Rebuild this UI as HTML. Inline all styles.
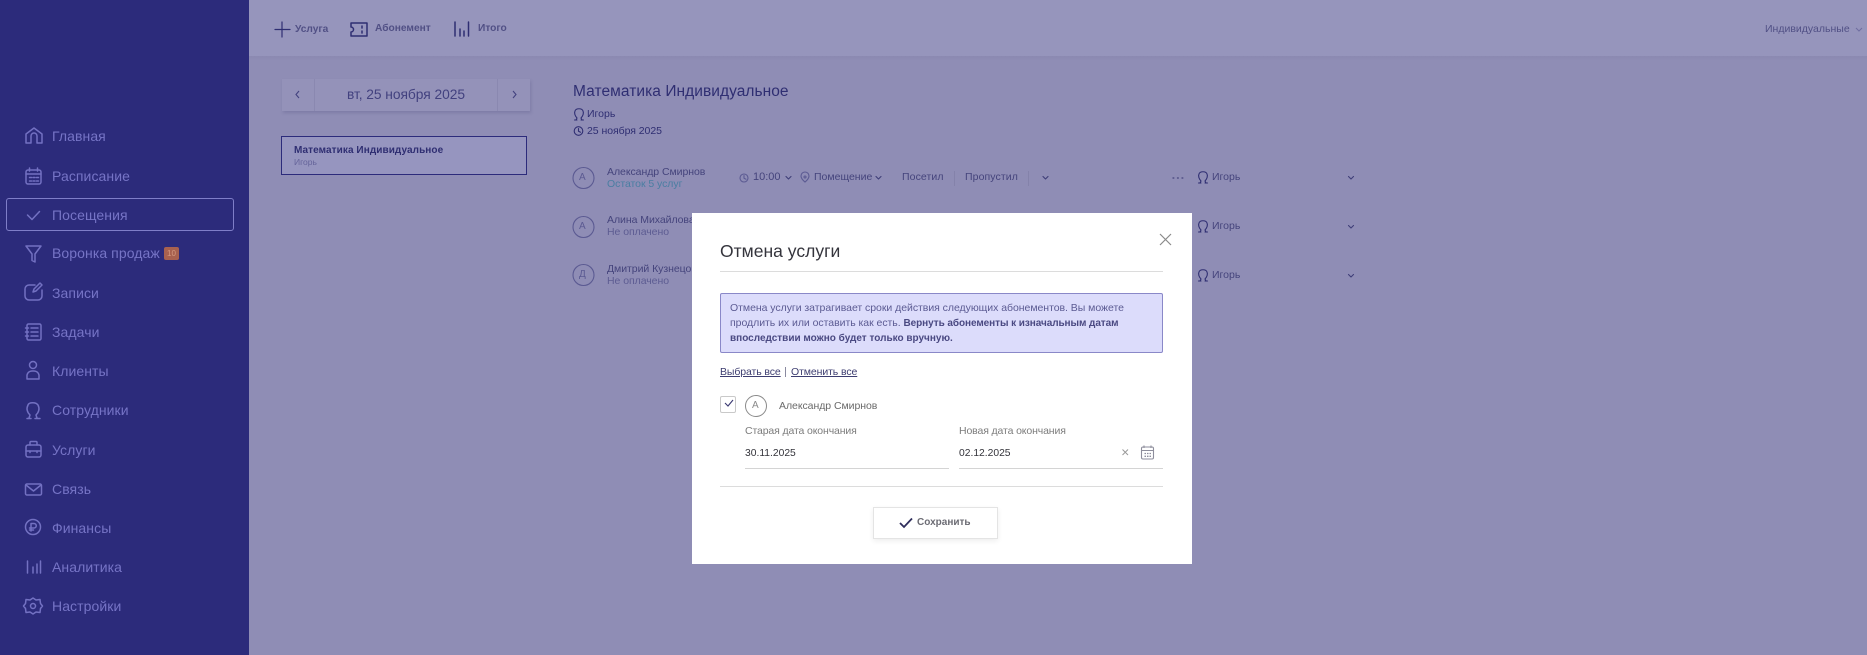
<!DOCTYPE html>
<html lang="ru"><head><meta charset="utf-8"><title>Отмена услуги</title>
<style>
*{box-sizing:border-box}
html,body{margin:0;padding:0;width:1867px;height:655px;overflow:hidden;background:#8f8db5;font-family:"Liberation Sans","DejaVu Sans",sans-serif}
.t{position:absolute;white-space:nowrap;line-height:1}
.a{position:absolute}
svg{position:absolute;overflow:visible;fill:none}
.s{font-size:14px;color:#7674c6;left:52px;letter-spacing:.08px}
.m{stroke:#7371c2;stroke-width:1.5}
.d{stroke:#2f2e72;stroke-width:1.1}
.dk{color:#2f2e72}
.g{color:#45447c}
.ln{position:absolute;height:1px;background:#dcdcdc}
</style></head><body>
<div class="a" style="left:0;top:0;width:249px;height:655px;background:#2c2b7b"></div>
<div class="a" style="left:6px;top:198px;width:228px;height:33px;border:1px solid #7f7ec8;border-radius:3px"></div>

<div class="t s" style="top:129px">Главная</div>
<div class="t s" style="top:169px">Расписание</div>
<div class="t s" style="top:208px">Посещения</div>
<div class="t s" style="top:246px">Воронка продаж</div>
<div class="a" style="left:164px;top:247px;width:15px;height:13px;background:#a8614f;border-radius:2px;color:#d5997f;font-size:8px;line-height:13px;text-align:center">10</div>
<div class="t s" style="top:286px">Записи</div>
<div class="t s" style="top:325px">Задачи</div>
<div class="t s" style="top:364px">Клиенты</div>
<div class="t s" style="top:403px">Сотрудники</div>
<div class="t s" style="top:443px">Услуги</div>
<div class="t s" style="top:482px">Связь</div>
<div class="t s" style="top:521px">Финансы</div>
<div class="t s" style="top:560px">Аналитика</div>
<div class="t s" style="top:599px">Настройки</div>

<svg class="m" style="left:0;top:-1px" width="249" height="655" stroke-linecap="round" stroke-linejoin="round">
<path d="M26 144v-9l8-6 8 6v9h-5v-7a3 3 0 0 0-6 0v7z"/>
<rect x="26" y="171" width="15" height="14" rx="2"/><path d="M26 175h15M29.500 169v3M37.500 169v3"/><path stroke-dasharray="2 1.500" d="M29.500 178.500h9M29.500 182h9"/>
<path d="M27.500 216l4.500 4.500 7.500-8"/>
<path d="M26 247h15l-6 8v8l-3-1.500v-6.500z"/>
<path d="M35 286h-6a4 4 0 0 0-4 4v7a4 4 0 0 0 4 4h9a4 4 0 0 0 4-4v-6M33 293l1-3 6-6 2 2-6 6z"/>
<rect x="27" y="325" width="14" height="16" rx="1.500"/><path d="M25.500 329h3M25.500 333h3M25.500 337h3M31 329h7M31 333h7M31 337h7"/>
<circle cx="33" cy="366" r="3.500"/><path d="M27 380v-4a5 5 0 0 1 5-4h2a5 5 0 0 1 5 4v4z"/>
<path d="M29 419l1-3c-3-3-4-6-2-10 1-3 8-3 10 0 2 4 1 7-2 10l1 3M27 419.500h4M35 419.500h5"/>
<rect x="26" y="446" width="15" height="12" rx="2"/><path d="M30 446v-2.500a1 1 0 0 1 1-1h5a1 1 0 0 1 1 1v2.500M26 452h15" /><path d="M30 452v1.500M37 452v1.500"/>
<rect x="25.500" y="485" width="16" height="11" rx="1.500"/><path d="M26 486l7.500 6 7.500-6"/>
<circle cx="33" cy="528" r="7.500"/><path d="M31 532v-7.500h3a2 2 0 0 1 0 4.500h-4.500M29.500 531h4"/>
<path d="M27.500 562v12M33 568v6M37 565v9M40.500 562v12"/>
<path d="M33 599l3 2 4-.5 .5 4 2 2.500-2 2.500-.5 4-4-.5-3 2-3-2-4 .5-.5-4-2-2.500 2-2.500 .5-4 4 .5z"/><circle cx="33" cy="607" r="2.500"/>
</svg>

<div class="a" style="left:249px;top:0;width:1618px;height:56px;background:#9695bc"></div>
<div class="a" style="left:249px;top:56px;width:1618px;height:5px;background:linear-gradient(#8b89b1,#8f8db5)"></div>

<svg class="d" style="left:0;top:0" width="1867" height="655" stroke-linecap="round" stroke-linejoin="round">
<path d="M282 22v15M275 29.500h15" stroke-width="1.200"/>
<path stroke-width="1.500" d="M351 23h16v13h-16v-4a2.500 2.500 0 0 0 0-5zM362 26v2M362 31v2"/>
<path stroke-width="1.500" d="M455 22v14M460 29v7M464 31v5M468.500 22v14"/>
</svg>
<div class="t g" style="left:295px;top:25px;font-size:10.200px;font-weight:bold;opacity:.85">Услуга</div>
<div class="t g" style="left:375px;top:24px;font-size:10.200px;font-weight:bold;opacity:.85">Абонемент</div>
<div class="t g" style="left:478px;top:24px;font-size:10.200px;font-weight:bold;opacity:.85">Итого</div>
<div class="t g" style="left:1765px;top:24px;font-size:10.500px;opacity:.85">Индивидуальные</div>
<svg style="left:1855px;top:27px;stroke:#6f6ea0;stroke-width:1" width="8" height="6"><path d="M1 1l3 3 3-3"/></svg>

<div class="a" style="left:282px;top:79px;width:248px;height:32px;background:#9492b9;box-shadow:1px 2px 3px rgba(50,50,100,.18)"></div>
<div class="a" style="left:314px;top:79px;width:1px;height:32px;background:#8a88b0"></div>
<div class="a" style="left:497px;top:79px;width:1px;height:32px;background:#8a88b0"></div>
<div class="t" style="left:347px;top:88px;font-size:13.800px;color:#42417f;letter-spacing:-.05px">вт, 25 ноября 2025</div>
<svg style="left:0;top:0;stroke:#43427f;stroke-width:1.100" width="600" height="120"><path d="M299 91l-3 3.500 3 3.500M513 91l3 3.500-3 3.500"/></svg>
<div class="a" style="left:281px;top:136px;width:246px;height:39px;background:#9695bf;border:1px solid #2c2b7b"></div>
<div class="t dk" style="left:294px;top:146px;font-size:10px;font-weight:bold;letter-spacing:.08px">Математика Индивидуальное</div>
<div class="t" style="left:294px;top:158px;font-size:8.500px;color:#65649a">Игорь</div>

<div class="t dk" style="left:573px;top:84px;font-size:15.500px;letter-spacing:.06px;color:#2f2e72">Математика Индивидуальное</div>
<div class="t dk" style="left:587px;top:109px;font-size:10.500px">Игорь</div>
<div class="t dk" style="left:587px;top:126px;font-size:10.500px;letter-spacing:-.05px">25 ноября 2025</div>

<svg class="d" style="left:0;top:0" width="1867" height="655" stroke-linecap="round" stroke-linejoin="round">
<path d="M576 120l1-2c-2-2-3-5-2-7 1-3 7-3 8 0 1 2 0 5-2 7l1 2M574.500 120h2.500M581 120h2.500"/>
<circle cx="578.500" cy="131" r="4.300"/><path d="M578.500 128.500v2.700l2 1"/>
<g stroke="#5b5a92">
<circle cx="583.500" cy="178" r="10.500"/><circle cx="583.500" cy="227" r="10.500"/><circle cx="583.500" cy="275" r="10.500"/>
<circle cx="744" cy="178" r="4"/><path d="M744 175.500v2.700l2 1"/>
<path d="M801 176a4 4 0 1 1 8 0c0 3-4 6-4 6s-4-3-4-6z"/><circle cx="805" cy="177" r="1"/>
<path d="M786 176.500l2.500 2.500 2.500-2.500M876 176.500l2.500 2.500 2.500-2.500M1043 176.500l2.500 2.500 2.500-2.500M1348.500 176.500l2.500 2.500 2.500-2.500M1348.500 225.500l2.500 2.500 2.500-2.500M1348.500 274.500l2.500 2.500 2.500-2.500" stroke="#3f3e78"/>
<path d="M1173 178h.8M1177.500 178h.8M1182 178h.8" stroke="#45447c" stroke-width="1.300"/>
</g>
<path d="M1200 183l1-2c-2-2-3-5-2-7 1-3 7-3 8 0 1 2 0 5-2 7l1 2M1198.500 183h2.500M1205 183h2.500"/>
<path d="M1200 232l1-2c-2-2-3-5-2-7 1-3 7-3 8 0 1 2 0 5-2 7l1 2M1198.500 232h2.500M1205 232h2.500"/>
<path d="M1200 281l1-2c-2-2-3-5-2-7 1-3 7-3 8 0 1 2 0 5-2 7l1 2M1198.500 281h2.500M1205 281h2.500"/>
</svg>
<div class="a" style="left:954px;top:171px;width:1px;height:15px;background:#8482aa"></div>
<div class="a" style="left:1028px;top:171px;width:1px;height:15px;background:#8482aa"></div>

<div class="t" style="left:579px;top:173px;font-size:10px;color:#5b5a92">А</div>
<div class="t" style="left:579px;top:222px;font-size:10px;color:#5b5a92">А</div>
<div class="t" style="left:579px;top:270px;font-size:10px;color:#5b5a92">Д</div>
<div class="t g" style="left:607px;top:167px;font-size:10.500px;letter-spacing:-.05px">Александр Смирнов</div>
<div class="t" style="left:607px;top:179px;font-size:10.500px;letter-spacing:-.05px;color:#4a7ea2">Остаток 5 услуг</div>
<div class="t g" style="left:607px;top:215px;font-size:10.500px;letter-spacing:-.05px">Алина Михайлова</div>
<div class="t" style="left:607px;top:227px;font-size:10.500px;letter-spacing:-.05px;color:#5d5c92">Не оплачено</div>
<div class="t g" style="left:607px;top:264px;font-size:10.500px;letter-spacing:-.05px">Дмитрий Кузнецов</div>
<div class="t" style="left:607px;top:276px;font-size:10.500px;letter-spacing:-.05px;color:#5d5c92">Не оплачено</div>
<div class="t g" style="left:753px;top:172px;font-size:11px">10:00</div>
<div class="t g" style="left:814px;top:172px;font-size:10.500px">Помещение</div>
<div class="t g" style="left:902px;top:172px;font-size:10.500px;letter-spacing:.1px">Посетил</div>
<div class="t g" style="left:965px;top:172px;font-size:10.500px;letter-spacing:.1px">Пропустил</div>
<div class="t g" style="left:1212px;top:172px;font-size:10.500px">Игорь</div>
<div class="t g" style="left:1212px;top:221px;font-size:10.500px">Игорь</div>
<div class="t g" style="left:1212px;top:270px;font-size:10.500px">Игорь</div>

<!-- modal -->
<div class="a" style="left:692px;top:213px;width:500px;height:351px;background:#fff"></div>
<div class="t" style="left:720px;top:243px;font-size:17.500px;color:#34343c;letter-spacing:.02px">Отмена услуги</div>
<svg style="left:1160px;top:234px;stroke:#8a8a8a;stroke-width:1.200" width="12" height="12"><path d="M0 0l11 11M11 0L0 11"/></svg>
<div class="ln" style="left:720px;top:271px;width:443px"></div>
<div class="a" style="left:720px;top:293px;width:443px;height:60px;background:#dcdcfb;border:1px solid #8a88c8;border-radius:2px"></div>
<div class="t" style="left:730px;top:303px;font-size:10.500px;color:#5c5b93;letter-spacing:-.04px">Отмена услуги затрагивает сроки действия следующих абонементов. Вы можете</div>
<div class="t" style="left:730px;top:318px;font-size:10.500px;color:#5c5b93;letter-spacing:-.04px">продлить их или оставить как есть. <b style="color:#4a4982;font-size:10px;letter-spacing:-.07px">Вернуть абонементы к изначальным датам</b></div>
<div class="t" style="left:730px;top:334px;font-size:10px;color:#4a4982;font-weight:bold;letter-spacing:0">впоследствии можно будет только вручную.</div>
<div class="t" style="left:720px;top:367px;font-size:10.500px;color:#3d3d70;text-decoration:underline;letter-spacing:-.1px">Выбрать все</div>
<div class="a" style="left:785px;top:367px;width:1px;height:10px;background:#8a8aa0"></div>
<div class="t" style="left:791px;top:367px;font-size:10.500px;color:#3d3d70;text-decoration:underline;letter-spacing:-.1px">Отменить все</div>

<div class="a" style="left:720px;top:396px;width:16px;height:17px;border:1px solid #c9c9c9;border-radius:2px"></div>
<svg style="left:0;top:0;stroke:#3b3a72;stroke-width:1.100" width="1867" height="655"><path d="M725 403l3 3 5-6"/></svg>
<svg style="left:0;top:0;stroke:#8a8a8a;stroke-width:1" width="1867" height="655"><circle cx="756" cy="406" r="10.500"/></svg>
<div class="t" style="left:752px;top:401px;font-size:10px;color:#8a8a8a">А</div>
<div class="t" style="left:779px;top:401px;font-size:10.500px;color:#6a6a6a;letter-spacing:-.05px">Александр Смирнов</div>
<div class="t" style="left:745px;top:426px;font-size:10.500px;color:#7c7c7c;letter-spacing:-.13px">Старая дата окончания</div>
<div class="t" style="left:959px;top:426px;font-size:10.500px;color:#7c7c7c;letter-spacing:-.13px">Новая дата окончания</div>
<div class="t" style="left:745px;top:449px;font-size:10.300px;color:#33333a">30.11.2025</div>
<div class="t" style="left:959px;top:449px;font-size:10.300px;color:#33333a">02.12.2025</div>
<div class="ln" style="left:745px;top:468px;width:204px;background:#d4d4d4"></div>
<div class="ln" style="left:959px;top:468px;width:204px;background:#d4d4d4"></div>
<svg style="left:0;top:0;stroke:#9a9a9a;stroke-width:1" width="1867" height="655"><path d="M1122.500 449.500l5.500 5.500M1128 449.500l-5.500 5.500"/></svg>
<svg style="left:0;top:0;stroke:#8e8e9c;stroke-width:1.100" width="1867" height="655"><rect x="1141.500" y="447" width="12" height="12" rx="1.500"/><path d="M1141.500 450.500h12M1144 445.500v2.500M1151 445.500v2.500"/><path stroke-dasharray="1.500 1" stroke-width="1.300" d="M1144.500 453.500h7M1144.500 456.300h7"/></svg>
<div class="ln" style="left:720px;top:486px;width:443px"></div>
<div class="a" style="left:873px;top:507px;width:125px;height:32px;background:#fff;border:1px solid #e4e4e4;box-shadow:0 2px 5px rgba(0,0,0,.07)"></div>
<svg style="left:0;top:0;stroke:#2f2e5c;stroke-width:1.800" width="1867" height="655"><path d="M900 523l4 4 8-8.500"/></svg>
<div class="t" style="left:917px;top:518px;font-size:10px;font-weight:bold;color:#6c6c74">Сохранить</div>
</body></html>
